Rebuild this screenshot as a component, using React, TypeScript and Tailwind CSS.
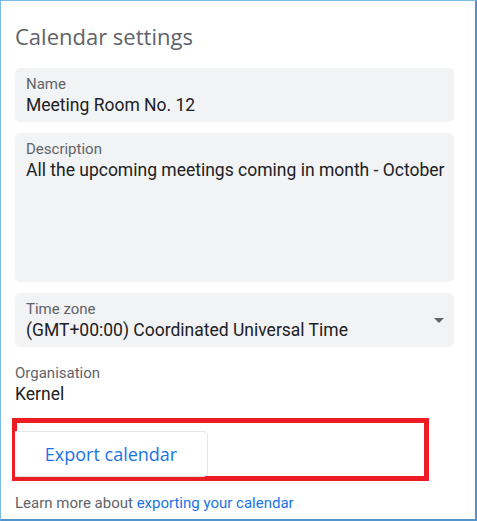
import React from 'react';

const roboto = { fontFamily: 'Roboto, "Liberation Sans", sans-serif' };

const Field: React.FC<{ label: string; value: string; tall?: boolean; select?: boolean }> = ({
  label,
  value,
  tall,
  select,
}) => (
  <div
    className={`relative rounded-[5px] bg-[#f1f3f4] pl-[11px] pt-[6px] ${tall ? 'h-[149px]' : 'h-[54px]'}`}
  >
    <div className="text-[15px] leading-[20px] text-[#5f6368]">{label}</div>
    <div className="whitespace-nowrap text-[17.5px] leading-[22px] text-[#202124]">{value}</div>
    {select && (
      <div className="absolute right-[10px] top-[25px] h-0 w-0 border-x-[5px] border-t-[5px] border-x-transparent border-t-[#5f6368]" />
    )}
  </div>
);

export default function App() {
  return (
    <div
      className="h-[521px] w-[477px] overflow-hidden border-t border-l border-r-2 border-b-2 border-t-[#7dbbe6] border-l-[#7dbbe6] border-r-[#5494cc] border-b-[#5494cc] bg-white"
      style={roboto}
    >
      <div className="pl-[14px] pr-[21px]">
        <h1
          className="pt-[20px] text-[22px] leading-[30px] text-[#5f6368]"
          style={{ fontFamily: '"Open Sans", sans-serif' }}
        >
          Calendar settings
        </h1>

        <div className="mt-[17px] flex flex-col gap-[11px]">
          <Field label="Name" value="Meeting Room No. 12" />
          <Field label="Description" value="All the upcoming meetings coming in month - October" tall />
          <Field label="Time zone" value="(GMT+00:00) Coordinated Universal Time" select />
        </div>

        <div className="mt-[16px]">
          <div className="text-[15px] leading-[20px] text-[#5f6368]">Organisation</div>
          <div className="text-[17.5px] leading-[22px] text-[#202124]">Kernel</div>
        </div>

        <div className="mt-[13px] ml-[-3px] h-[63px] w-[417px] border-[5px] border-[#ed1c24]">
          <div className="flex h-full items-end">
            <button
              type="button"
              className="mb-[-1px] ml-[-2px] flex h-[46px] w-[193px] items-center justify-center rounded-r-[5px] border border-l-0 border-[#e3e5e8] bg-white text-[18px] font-medium text-[#1a73e8]"
              style={{ fontFamily: '"Open Sans", sans-serif' }}
            >
              Export calendar
            </button>
          </div>
        </div>

        <p className="mt-[12px] text-[15px] leading-[20px] text-[#5f6368]">
          Learn more about <span className="text-[#1a73e8]">exporting your calendar</span>
        </p>
      </div>
    </div>
  );
}
